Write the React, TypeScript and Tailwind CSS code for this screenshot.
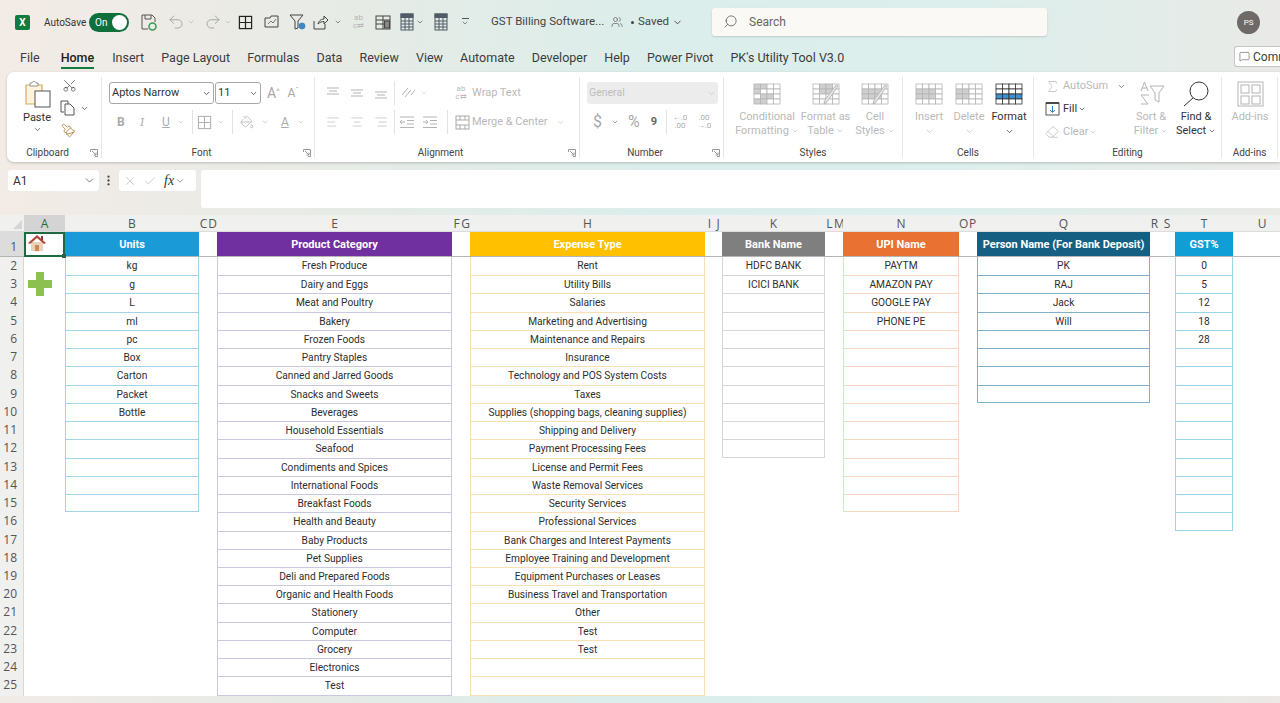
import React from 'react';
import { ChevronDown, Search, Undo2, Redo2, Scissors, MoreVertical, X, Check, MessageSquare, Sigma, Paintbrush, PaintBucket, Eraser, AlignLeft, AlignCenter, AlignRight, Users } from 'lucide-react';

const FONT = 'font-["Roboto","Liberation_Sans",sans-serif]';

type Col = { letter: string; title?: string; head?: string; line?: string; items?: string[]; last?: number };

const UNITS = ['kg', 'g', 'L', 'ml', 'pc', 'Box', 'Carton', 'Packet', 'Bottle'];
const CATEGORIES = ['Fresh Produce', 'Dairy and Eggs', 'Meat and Poultry', 'Bakery', 'Frozen Foods', 'Pantry Staples', 'Canned and Jarred Goods', 'Snacks and Sweets', 'Beverages', 'Household Essentials', 'Seafood', 'Condiments and Spices', 'International Foods', 'Breakfast Foods', 'Health and Beauty', 'Baby Products', 'Pet Supplies', 'Deli and Prepared Foods', 'Organic and Health Foods', 'Stationery', 'Computer', 'Grocery', 'Electronics', 'Test'];
const EXPENSES = ['Rent', 'Utility Bills', 'Salaries', 'Marketing and Advertising', 'Maintenance and Repairs', 'Insurance', 'Technology and POS System Costs', 'Taxes', 'Supplies (shopping bags, cleaning supplies)', 'Shipping and Delivery', 'Payment Processing Fees', 'License and Permit Fees', 'Waste Removal Services', 'Security Services', 'Professional Services', 'Bank Charges and Interest Payments', 'Employee Training and Development', 'Equipment Purchases or Leases', 'Business Travel and Transportation', 'Other', 'Test', 'Test'];

const COLS: Col[] = [
  { letter: 'A' },
  { letter: 'B', title: 'Units', head: 'bg-[#1a9bd7]', line: 'border-[#a3d3e8]', items: UNITS, last: 15 },
  { letter: 'C' },
  { letter: 'D' },
  { letter: 'E', title: 'Product Category', head: 'bg-[#7030a0]', line: 'border-[#c8c8e0]', items: CATEGORIES, last: 26 },
  { letter: 'F' },
  { letter: 'G' },
  { letter: 'H', title: 'Expense Type', head: 'bg-[#ffc000]', line: 'border-[#fbdfb4]', items: EXPENSES, last: 26 },
  { letter: 'I' },
  { letter: 'J' },
  { letter: 'K', title: 'Bank Name', head: 'bg-[#7f7f7f]', line: 'border-[#d6d6d6]', items: ['HDFC BANK', 'ICICI BANK'], last: 12 },
  { letter: 'L' },
  { letter: 'M' },
  { letter: 'N', title: 'UPI Name', head: 'bg-[#e97132]', line: 'border-[#f9d6c0]', items: ['PAYTM', 'AMAZON PAY', 'GOOGLE PAY', 'PHONE PE'], last: 15 },
  { letter: 'O' },
  { letter: 'P' },
  { letter: 'Q', title: 'Person Name (For Bank Deposit)', head: 'bg-[#156082]', line: 'border-[#7fb0cb]', items: ['PK', 'RAJ', 'Jack', 'Will'], last: 9 },
  { letter: 'R' },
  { letter: 'S' },
  { letter: 'T', title: 'GST%', head: 'bg-[#0f9ed5]', line: 'border-[#9bd5ea]', items: ['0', '5', '12', '18', '28'], last: 16 },
  { letter: 'U' },
];

const GRID = 'grid grid-cols-[24px_41px_134px_9px_9px_235px_9px_9px_235px_9px_8px_103px_9px_9px_116px_9px_9px_173px_9px_16px_58px_58px]';

const DIS = '#b4b4b4';

const Down = ({ c = 'text-[#8a8a8a]', s = 10 }: { c?: string; s?: number }) => (
  <ChevronDown size={s} strokeWidth={2} className={c} />
);

// big ribbon drawing: 4x4 sheet with a few shaded cells
const SheetIcon = ({ fill = [], color = DIS, brush = false, accent }: { fill?: number[]; color?: string; brush?: boolean; accent?: string }) => (
  <svg width="28" height="24" viewBox="0 0 28 24" fill="none">
    {[0, 1, 2, 3].map(r => [0, 1, 2, 3].map(c => (
      <rect key={`${r}-${c}`} x={1 + c * 6.5} y={2 + r * 5} width="6.5" height="5"
        fill={fill.includes(r * 4 + c) ? (accent || '#cfcfcf') : '#fff'} stroke={color} strokeWidth="0.8" />
    )))}
    {brush && <path d="M26 4 L15 20 L12 22 L13 18 L24 3 Z" fill="#e4e4e4" stroke={color} strokeWidth="0.9" />}
  </svg>
);

const MiniGrid = ({ color = DIS, s = 15, w = 1.1 }: { color?: string; s?: number; w?: number }) => (
  <svg width={s} height={s} viewBox="0 0 16 16" fill="none" stroke={color} strokeWidth={w}>
    <rect x="1.5" y="1.5" width="13" height="13" />
    <path d="M8 1.5V14.5M1.5 8H14.5" />
  </svg>
);

const CalcIcon = () => (
  <svg width="14" height="18" viewBox="0 0 14 18" fill="none" stroke="#4f5b66" strokeWidth="1">
    <rect x="1" y="1" width="12" height="16" />
    <rect x="1" y="1" width="12" height="3.5" fill="#4f5b66" />
    <path d="M1 8H13M1 11H13M1 14H13M5 4V17M9 4V17" />
  </svg>
);

const Lines = ({ kind }: { kind: 'top' | 'mid' | 'bot' }) => (
  <svg width="14" height="14" viewBox="0 0 14 14" stroke={DIS} strokeWidth="1.1">
    {kind === 'top' && <path d="M1 2H13M3 5H11M1 8H13" />}
    {kind === 'mid' && <path d="M1 4H13M3 7H11M1 10H13" />}
    {kind === 'bot' && <path d="M1 6H13M3 9H11M1 12H13" />}
  </svg>
);

const Indent = ({ flip = false }: { flip?: boolean }) => (
  <svg width="16" height="14" viewBox="0 0 16 14" stroke={DIS} strokeWidth="1" fill="none">
    <path d="M1 2H15M8 5.5H15M8 9H15M1 12.5H15" />
    <path d={flip ? 'M1 7H6M4 5L6 7L4 9' : 'M6 7H1M3 5L1 7L3 9'} />
  </svg>
);

const Sep = () => <div className="w-px h-[24px] bg-[#e2e2e2]" />;

const Group = ({ w, label, launcher, children }: { w: string; label: string; launcher?: boolean; children: React.ReactNode }) => (
  <div className={`${w} shrink-0 flex flex-col mt-[5px] mb-[4px] border-r border-[#e6e6e6]`}>
    <div className="h-[67px]">{children}</div>
    <div className="h-[14px] pt-[2px] grid grid-cols-[1fr_auto_1fr] items-center text-[10px] leading-[14px] text-[#444]">
      <span />
      <span className={launcher ? 'pr-[13px]' : ''}>{label}</span>
      {launcher ? (
        <svg width="8" height="8" viewBox="0 0 8 8" fill="none" stroke="#999" strokeWidth="1" className="justify-self-end mr-[3px]">
          <path d="M.5 3V.5H7.5V7.5H5M2 2L6 6M6 3.5V6H3.5" />
        </svg>
      ) : <span />}
    </div>
  </div>
);

const BigBtn = ({ w, icon, l1, l2, dark = false, chev = false }: { w: string; icon: React.ReactNode; l1: string; l2?: string; dark?: boolean; chev?: boolean }) => (
  <div className={`${w} shrink-0 flex flex-col items-center pt-[4px] text-[11px] leading-[14px] ${dark ? 'text-[#333]' : 'text-[#b9b9b9]'}`}>
    <div className="h-[25px] flex items-center justify-center">{icon}</div>
    <div className="mt-[4px] whitespace-nowrap">{l1}</div>
    {l2 ? (
      <div className="flex items-center gap-[2px] whitespace-nowrap">{l2}{chev && <Down s={8} c={dark ? 'text-[#333]' : 'text-[#b9b9b9]'} />}</div>
    ) : (
      <div className="h-[14px] flex items-center"><Down s={9} c={dark ? 'text-[#333]' : 'text-[#b9b9b9]'} /></div>
    )}
  </div>
);

const TitleBar = () => (
  <div className="h-[44px] flex items-center text-[#444]">
    <div className="ml-[15px] w-[15px] h-[15px] rounded-[2px] bg-[#107c41] text-white text-[10px] font-bold leading-[15px] text-center">X</div>
    <span className="ml-[14px] w-[41px] text-[10px] text-[#333]">AutoSave</span>
    <div className="ml-[4px] w-[40px] h-[19px] rounded-full bg-[#0f703b] flex items-center justify-between pl-[6px] pr-[2px]">
      <span className="text-[10px] text-white">On</span>
      <span className="w-[15px] h-[15px] rounded-full bg-white" />
    </div>
    <svg className="ml-[12px]" width="16" height="17" viewBox="0 0 16 17" fill="none" stroke="#555" strokeWidth="1">
      <path d="M1 1H11L14 4V8M1 1V15H7M4 1V5H10V1" />
      <circle cx="11.5" cy="12.5" r="3.5" stroke="#3a9a5b" strokeWidth="1.6" />
    </svg>
    <Undo2 className="ml-[10px]" size={18} strokeWidth={1.3} color="#a5a5a5" />
    <Down s={8} c="text-[#b5b5b5] ml-[2px]" />
    <Redo2 className="ml-[9px]" size={18} strokeWidth={1.3} color="#a5a5a5" />
    <Down s={8} c="text-[#b5b5b5] ml-[2px]" />
    <div className="ml-[6px]"><MiniGrid color="#222" w={1.3} /></div>
    <svg className="ml-[11px]" width="16" height="14" viewBox="0 0 16 14" fill="none" stroke="#444" strokeWidth="1">
      <path d="M1 3H6L7 1H14V12H1Z" />
      <path d="M4 9L7 6L9 8L12 4" stroke="#777" />
    </svg>
    <svg className="ml-[9px]" width="18" height="17" viewBox="0 0 18 17" fill="none" stroke="#444" strokeWidth="1">
      <path d="M1 1H14L9 7V14L6 15V7Z" />
      <circle cx="13" cy="12" r="3" fill="#3f87c5" stroke="#3f87c5" />
    </svg>
    <svg className="ml-[6px]" width="16" height="15" viewBox="0 0 16 15" fill="none" stroke="#444" strokeWidth="1">
      <path d="M1 6V14H12V9M5 9C6 5 9 4 11 4V1L15 5L11 9V6.5C9 6.5 7 7 5 9Z" />
    </svg>
    <Down s={8} c="text-[#555] ml-[5px]" />
    <span className="ml-[10px] w-[13px] text-[8px] leading-[8px] text-[#b5b5b5] text-center">ab<br />c⇄</span>
    <svg className="ml-[10px]" width="16" height="15" viewBox="0 0 16 15" fill="none" stroke="#444" strokeWidth="1">
      <rect x="1" y="1" width="14" height="13" />
      <path d="M1 5H15M1 9H15M8 1V14" />
      <rect x="9.5" y="6" width="5" height="7" fill="#888" />
    </svg>
    <div className="ml-[9px]"><CalcIcon /></div>
    <Down s={8} c="text-[#555] ml-[2px]" />
    <div className="ml-[10px]"><CalcIcon /></div>
    <div className="ml-[13px] flex flex-col items-center text-[#555]">
      <div className="w-[7px] h-px bg-[#555]" />
      <Down s={8} c="text-[#555]" />
    </div>
    <span className="ml-[22px] text-[11.5px] w-[112px] whitespace-nowrap text-[#444]">GST Billing Software...</span>
    <Users className="ml-[8px]" size={12} strokeWidth={1.3} color="#555" />
    <span className="ml-[8px] w-[3px] h-[3px] rounded-full bg-[#444]" />
    <span className="ml-[4px] text-[11.5px]">Saved</span>
    <Down s={11} c="text-[#444] ml-[3px]" />
    <div className="ml-[29px] -mt-[1px] w-[335px] h-[28px] rounded-[3px] bg-[#fbf9f6] shadow-[0_1px_2px_rgba(0,0,0,0.15)] flex items-center pl-[11px]">
      <Search size={15} strokeWidth={1.2} color="#555" className="-scale-x-100" />
      <span className="ml-[11px] text-[12px] text-[#666]">Search</span>
    </div>
    <div className="ml-[190px] w-[23px] h-[23px] rounded-full bg-[#6e6a68] text-white text-[8px] leading-[23px] text-center">PS</div>
  </div>
);

const TABS = ['Insert', 'Page Layout', 'Formulas', 'Data', 'Review', 'View', 'Automate', 'Developer', 'Help', 'Power Pivot', "PK's Utility Tool V3.0"];

const TabBar = () => (
  <div className="h-[28px] flex items-center text-[12.5px] text-[#3c3c3c]">
    <span className="ml-[20px]">File</span>
    <div className="ml-[21px] h-[28px] flex flex-col justify-center font-medium relative text-[#222]">
      Home
      <span className="absolute left-0 right-0 bottom-[3px] h-[2px] bg-[#107c41]" />
    </div>
    <div className="ml-[18px] flex gap-[17.1px] whitespace-nowrap">
      {TABS.map(t => <span key={t}>{t}</span>)}
    </div>
    <div className="ml-auto w-[46px] h-[21px] mt-[-3px] rounded-l-[3px] bg-white border border-[#c5c5c5] border-r-0 flex items-center pl-[4px] gap-[3px] overflow-hidden whitespace-nowrap">
      <MessageSquare size={11} strokeWidth={1.2} color="#444" className="shrink-0" />
      <span className="text-[12px]">Comments</span>
    </div>
  </div>
);

const Ribbon = () => (
  <div className="ml-[7px] h-[90px] rounded-l-[7px] bg-white shadow-[0_1px_3px_rgba(0,0,0,0.2)] flex">
    <Group w="w-[95px]" label="Clipboard" launcher>
      <div className="flex h-full">
        <div className="ml-[7px] w-[46px] flex flex-col items-center text-[11px] text-[#333] leading-[14px]">
          <svg width="27" height="28" viewBox="0 0 27 28" fill="none" className="mt-[3px]">
            <path d="M2 5H18V24H2Z" fill="#fff4de" stroke="#d6ab62" strokeWidth="1.2" />
            <path d="M6 6V3H8C8 1 12 1 12 3H14V6Z" fill="#fff" stroke="#888" strokeWidth="0.9" />
            <rect x="11" y="11" width="15" height="16" fill="#fff" stroke="#555" strokeWidth="1" />
          </svg>
          <div className="mt-[3px]">Paste</div>
          <Down s={9} c="text-[#444]" />
        </div>
        <div className="ml-[0px] flex flex-col">
          <Scissors size={15} strokeWidth={1.1} color="#444" className="rotate-[-90deg] mt-[1px] ml-[2px]" />
          <div className="flex items-center mt-[7px]">
            <svg width="16" height="16" viewBox="0 0 16 16" fill="none" stroke="#555" strokeWidth="1">
              <path d="M1 1H8V4M1 1V12H4M5 4H10L14 8V15H5Z" />
            </svg>
            <Down s={9} c="text-[#444] ml-[4px]" />
          </div>
          <Paintbrush size={15} strokeWidth={1.2} color="#a5701f" className="mt-[7px] ml-[1px] -scale-x-100" />
        </div>
      </div>
    </Group>

    <Group w="w-[213px]" label="Font" launcher>
      <div className="pt-[5px] pl-[7px]">
        <div className="h-[22px] flex items-center">
          <div className="w-[105px] h-[22px] border border-[#a8a8a8] rounded-[3px] flex items-center justify-between px-[2px] text-[11px] text-[#333]">
            Aptos Narrow <Down s={9} c="text-[#333]" />
          </div>
          <div className="ml-px w-[46px] h-[22px] border border-[#a8a8a8] rounded-[3px] flex items-center justify-between px-[2px] text-[11px] text-[#333]">
            11 <Down s={9} c="text-[#333]" />
          </div>
          <span className="ml-[6px] text-[14px] text-[#a8a8a8]">A<sup className="text-[8px]">^</sup></span>
          <span className="ml-[8px] text-[12px] text-[#a8a8a8]">A<sup className="text-[8px]">ˇ</sup></span>
        </div>
        <div className="mt-[7px] h-[22px] flex items-center text-[12px] text-[#aaa] pl-[8px]">
          <span className="font-bold w-[23px]">B</span>
          <span className="italic w-[22px] font-serif">I</span>
          <span className="underline w-[15px]">U</span>
          <Down s={8} c="text-[#bbb]" />
          <div className="ml-[7px]"><Sep /></div>
          <div className="ml-[4px]"><MiniGrid color="#b0b0b0" /></div>
          <Down s={8} c="text-[#bbb] ml-[5px]" />
          <div className="ml-[7px]"><Sep /></div>
          <PaintBucket size={14} strokeWidth={1.2} color="#aaa" className="ml-[7px]" />
          <Down s={8} c="text-[#bbb] ml-[7px]" />
          <span className="ml-[12px] underline">A</span>
          <Down s={8} c="text-[#bbb] ml-[8px]" />
        </div>
      </div>
    </Group>

    <Group w="w-[265px]" label="Alignment" launcher>
      <div className="pt-[5px] pl-[11px] text-[11px] text-[#b9b9b9]">
        <div className="h-[22px] flex items-center">
          <Lines kind="top" />
          <div className="ml-[10px]"><Lines kind="mid" /></div>
          <div className="ml-[10px]"><Lines kind="bot" /></div>
          <div className="ml-[6px]"><Sep /></div>
          <svg className="ml-[5px]" width="16" height="14" viewBox="0 0 16 14" fill="none" stroke={DIS}>
            <path d="M2 9L8 2M5 11L11 4M11 9L15 4" />
          </svg>
          <Down s={8} c="text-[#ccc] ml-[4px]" />
          <div className="ml-[27px] w-[12px] text-[8px] leading-[8px] text-center">ab<br />c⇄</div>
          <span className="ml-[5px]">Wrap Text</span>
        </div>
        <div className="mt-[7px] h-[22px] flex items-center">
          <AlignLeft size={14} strokeWidth={1.1} color={DIS} />
          <AlignCenter size={14} strokeWidth={1.1} color={DIS} className="ml-[10px]" />
          <AlignRight size={14} strokeWidth={1.1} color={DIS} className="ml-[10px]" />
          <div className="ml-[6px]"><Sep /></div>
          <div className="ml-[4px]"><Indent /></div>
          <div className="ml-[7px]"><Indent flip /></div>
          <div className="ml-[9px]"><Sep /></div>
          <svg className="ml-[7px]" width="15" height="15" viewBox="0 0 15 15" fill="none" stroke="#aaa">
            <rect x="1" y="1" width="13" height="13" />
            <path d="M1 5H14M1 10H14M5 1V5M10 1V5M5 10V14M10 10V14" />
          </svg>
          <span className="ml-[2px]">Merge &amp; Center</span>
          <Down s={9} c="text-[#ccc] ml-[8px]" />
        </div>
      </div>
    </Group>

    <Group w="w-[144px]" label="Number" launcher>
      <div className="pt-[5px] pl-[7px] text-[#a8a8a8]">
        <div className="w-[131px] h-[22px] rounded-[3px] bg-[#ececec] flex items-center justify-between px-[2px] text-[10.5px] text-[#bdbdbd]">
          General <Down s={9} c="text-[#c5c5c5]" />
        </div>
        <div className="mt-[7px] h-[22px] flex items-center text-[15px] pl-[6px]">
          <span className="w-[18px] text-[16px]">$</span>
          <Down s={8} c="text-[#777]" />
          <span className="ml-[9px] text-[16px]">%</span>
          <span className="ml-[11px] font-bold text-[#666] text-[11px]">9</span>
          <div className="ml-[9px]"><Sep /></div>
          <span className="ml-[5px] w-[16px] text-[8px] leading-[8px] text-center">←.0<br />.00</span>
          <span className="ml-[8px] w-[16px] text-[8px] leading-[8px] text-center">.00<br />→.0</span>
        </div>
      </div>
    </Group>

    <Group w="w-[179px]" label="Styles">
      <div className="flex pl-[11px]">
        <BigBtn w="w-[64px]" icon={<SheetIcon fill={[0, 1, 4, 9, 10, 12, 13]} />} l1="Conditional" l2="Formatting" chev />
        <BigBtn w="w-[53px]" icon={<SheetIcon fill={[1, 2, 5, 6]} brush />} l1="Format as" l2="Table" chev />
        <BigBtn w="w-[46px]" icon={<SheetIcon fill={[4, 5, 6, 8, 9, 10]} brush />} l1="Cell" l2="Styles" chev />
      </div>
    </Group>

    <Group w="w-[131px]" label="Cells">
      <div className="flex pl-[6px]">
        <BigBtn w="w-[40px]" icon={<SheetIcon fill={[4, 5, 6, 8, 9, 10]} />} l1="Insert" />
        <BigBtn w="w-[40px]" icon={<SheetIcon fill={[4, 5, 8, 9]} />} l1="Delete" />
        <BigBtn w="w-[40px]" dark icon={<SheetIcon fill={[8, 9, 10, 11]} color="#333" accent="#3f92d2" />} l1="Format" />
      </div>
    </Group>

    <Group w="w-[188px]" label="Editing">
      <div className="flex">
        <div className="ml-[11px] w-[90px] flex flex-col text-[11px] leading-[14px] text-[#b9b9b9]">
          <div className="h-[18px] flex items-center">
            <Sigma size={15} strokeWidth={1.2} color={DIS} />
            <span className="ml-[3px]">AutoSum</span>
            <Down s={9} c="text-[#666] ml-[9px]" />
          </div>
          <div className="h-[28px] flex items-center text-[#333]">
            <svg width="15" height="14" viewBox="0 0 15 14" fill="none">
              <rect x="1" y="1" width="13" height="12" stroke="#555" />
              <path d="M1 1H14" stroke="#333" strokeWidth="1.6" />
              <path d="M7.5 4V10M5 8L7.5 10.5L10 8" stroke="#2b79c2" />
            </svg>
            <span className="ml-[3px]">Fill</span>
            <Down s={8} c="text-[#333] ml-[1px]" />
          </div>
          <div className="h-[18px] flex items-center">
            <Eraser size={14} strokeWidth={1.2} color={DIS} />
            <span className="ml-[4px]">Clear</span>
            <Down s={8} c="text-[#bbb] ml-[1px]" />
          </div>
        </div>
        <BigBtn w="w-[40px]" icon={
          <svg width="27" height="25" viewBox="0 0 27 25" fill="none" stroke={DIS} strokeWidth="1">
            <path d="M11 14H3L10 23H3M3 10L6.5 1L10 10M4 7H9M12 5H26L21 12V21L17 19V12Z" />
          </svg>
        } l1="Sort &" l2="Filter" chev />
        <BigBtn w="w-[50px]" dark icon={
          <svg width="27" height="26" viewBox="0 0 27 26" fill="none" stroke="#333" strokeWidth="1">
            <circle cx="16" cy="10" r="9" />
            <path d="M10 17L1 25" />
          </svg>
        } l1="Find &" l2="Select" chev />
      </div>
    </Group>

    <Group w="w-[56px]" label="Add-ins">
      <BigBtn w="w-[56px]" icon={
        <svg width="27" height="26" viewBox="0 0 27 26" fill="none" stroke={DIS}>
          <rect x="1" y="1" width="25" height="24" />
          <rect x="4" y="4" width="8" height="8" />
          <rect x="15" y="4" width="8" height="8" />
          <rect x="4" y="15" width="8" height="8" />
          <rect x="15" y="15" width="8" height="8" />
        </svg>
      } l1="Add-ins" l2=" " />
    </Group>
  </div>
);

const FormulaBar = () => (
  <div className="mt-[8px] flex items-start text-[#333]">
    <div className="ml-[8px] w-[91px] h-[21px] rounded-[3px] bg-white flex items-center justify-between pl-[5px] pr-[3px] text-[12px]">
      A1 <ChevronDown size={13} strokeWidth={1.3} color="#444" />
    </div>
    <MoreVertical size={13} strokeWidth={2.2} color="#444" className="ml-[3px] mt-[4px]" />
    <div className="ml-[4px] w-[77px] h-[21px] rounded-[3px] bg-white flex items-center pl-[4px]">
      <X size={14} strokeWidth={1} color="#aaa" />
      <Check size={14} strokeWidth={1} color="#aaa" className="ml-[6px]" />
      <span className="ml-[7px] font-['Liberation_Serif',serif] italic text-[14px]">fx</span>
      <Down s={10} c="text-[#888] ml-[1px]" />
    </div>
    <div className="ml-[5px] flex-1 h-[38px] rounded-l-[3px] bg-white" />
  </div>
);

const House = () => (
  <svg width="20" height="18" viewBox="0 0 20 18">
    <path d="M4 8H16V17H4Z" fill="#e8d3b8" />
    <rect x="8" y="11" width="4" height="6" fill="#c98a55" />
    <path d="M10 1L1 9L3 10L10 4L17 10L19 9Z" fill="#b5473c" />
    <rect x="14" y="2" width="2" height="4" fill="#8f3a32" />
  </svg>
);

const Plus = () => (
  <svg width="24" height="24" viewBox="0 0 24 24">
    <path d="M8 0H16V8H24V16H16V24H8V16H0V8H8Z" fill="#8cc152" />
  </svg>
);

const Sheet = () => {
  const rows = Array.from({ length: 26 }, (_, i) => i + 1);
  return (
    <div className="mt-[7px] h-[481px] overflow-hidden">
      {/* column letters */}
      <div className={`${GRID} h-[17px] bg-[#f0f0ef] border-b border-[#dcdcdc] text-[12px] leading-[17px] text-[#555] text-center font-["Open_Sans","Liberation_Sans",sans-serif]`}>
        <div className="flex justify-end items-end pr-[2px] pb-[2px]">
          <div className="w-0 h-0 border-l-[9px] border-l-transparent border-b-[9px] border-b-[#d5d5d5]" />
        </div>
        {COLS.map(c => (
          <div key={c.letter} className={`overflow-hidden ${c.letter === 'A' ? 'bg-[#d4d4d4] text-[#1c6b40]' : ''}`}>{c.letter}</div>
        ))}
      </div>
      {/* rows */}
      <div className="bg-white">
        {rows.map(r => (
          <div key={r} className={`${GRID} ${r === 1 ? 'h-[25px] border-b border-[#b5b5b5]' : 'h-[18.24px]'}`}>
            <div className={`border-r border-[#d8d8d8] text-[12px] text-[#555] text-right pr-[6px] font-["Open_Sans","Liberation_Sans",sans-serif] ${r === 1 ? 'bg-[#dcdcdc] flex items-end justify-end h-[24px] leading-[18px]' : 'bg-[#f0f0ef] leading-[18px]'}`}>{r < 26 ? r : ''}</div>
            {COLS.map(c => {
              if (c.letter === 'A') {
                return (
                  <div key={c.letter} className={r === 1 ? 'relative h-[25px] border-2 border-[#1f6b41] flex items-start justify-start pl-[1px]' : r === 3 ? 'h-[18px] flex items-center justify-start pl-[4px]' : 'h-[18px]'}>
                    {r === 1 && <House />}
                    {r === 1 && <span className="absolute right-[-3px] bottom-[-3px] w-[4px] h-[4px] bg-[#1f6b41]" />}
                    {r === 3 && <Plus />}
                  </div>
                );
              }
              if (!c.title) return <div key={c.letter} />;
              if (r === 1) {
                return (
                  <div key={c.letter} className={`${c.head} text-white text-[11px] font-bold leading-[25px] h-[24px] text-center whitespace-nowrap overflow-hidden`}>{c.title}</div>
                );
              }
              if (r > (c.last as number)) return <div key={c.letter} />;
              return (
                <div key={c.letter} className={`border-x ${c.line} ${r > 2 ? 'border-t' : ''} ${r === c.last ? 'border-b' : ''} text-[10.2px] leading-[17px] text-[#2e2e2e] text-center whitespace-nowrap overflow-hidden`}>
                  {c.items?.[r - 2] ?? ''}
                </div>
              );
            })}
          </div>
        ))}
      </div>
    </div>
  );
};

export default function App() {
  return (
    <div className={`${FONT} w-[1280px] h-[703px] overflow-hidden bg-[linear-gradient(95deg,#f3ebe6_0%,#e6ebe6_28%,#dbeeeb_50%,#dcefec_72%,#e6ebe8_90%,#ece9e6_100%)]`}>
      <TitleBar />
      <TabBar />
      <Ribbon />
      <FormulaBar />
      <Sheet />
    </div>
  );
}
